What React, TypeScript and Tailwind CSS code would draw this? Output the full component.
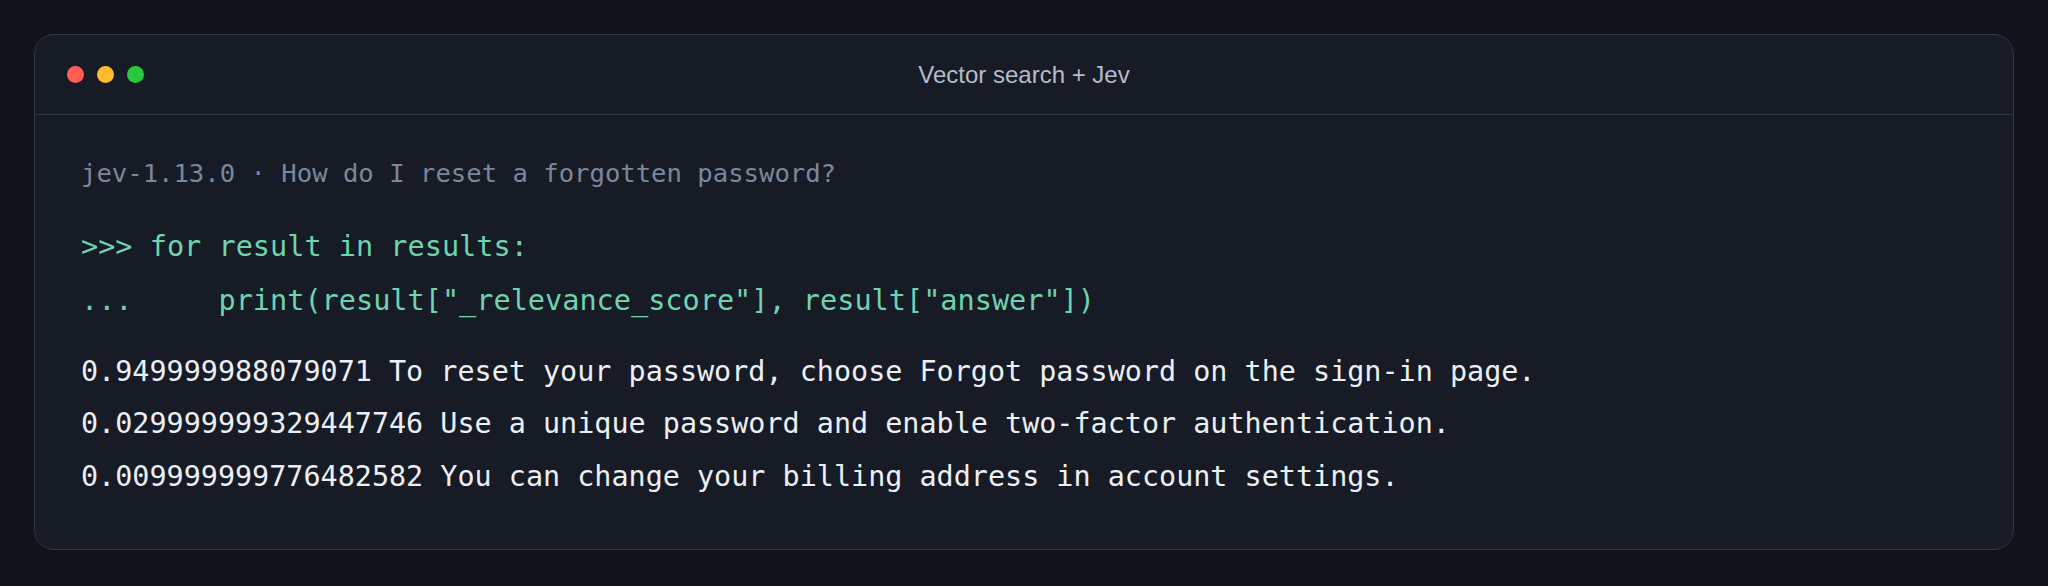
export default function App() {
  const mono = { fontFamily: '"DejaVu Sans Mono", "Liberation Mono", monospace' }

  return (
    <div className="min-h-screen bg-[#10131a] p-[34px]">
      <div className="rounded-[20px] border border-[#2f3645] bg-[#161b26] overflow-hidden">
        {/* Title bar */}
        <div className="grid grid-cols-[1fr_auto_1fr] items-center h-[80px] border-b border-[#2f3645] px-[32px]">
          <div className="flex items-center gap-[13px]">
            <span className="w-[17px] h-[17px] rounded-full bg-[#ff5f57]" />
            <span className="w-[17px] h-[17px] rounded-full bg-[#febc2e]" />
            <span className="w-[17px] h-[17px] rounded-full bg-[#28c840]" />
          </div>
          <div className="text-[24px] text-[#b4bdca] font-['Liberation_Sans',Arial,sans-serif]">
            Vector search + Jev
          </div>
          <div />
        </div>

        {/* Console */}
        <div className="px-[46px] pt-[40px] pb-[46px] whitespace-pre" style={mono}>
          <div className="text-[25.6px] leading-[36px] text-[#7b879b]">
            jev-1.13.0 · How do I reset a forgotten password?
          </div>
          <div className="mt-[29px] text-[28.55px] leading-[53.8px] text-[#6fd4ae]">
            <div>{'>>> for result in results:'}</div>
            <div>{'...     print(result["_relevance_score"], result["answer"])'}</div>
          </div>
          <div className="mt-[18px] text-[28.43px] leading-[52.5px] text-[#eceff4]">
            <div>0.949999988079071 To reset your password, choose Forgot password on the sign-in page.</div>
            <div>0.029999999329447746 Use a unique password and enable two-factor authentication.</div>
            <div>0.009999999776482582 You can change your billing address in account settings.</div>
          </div>
        </div>
      </div>
    </div>
  )
}
